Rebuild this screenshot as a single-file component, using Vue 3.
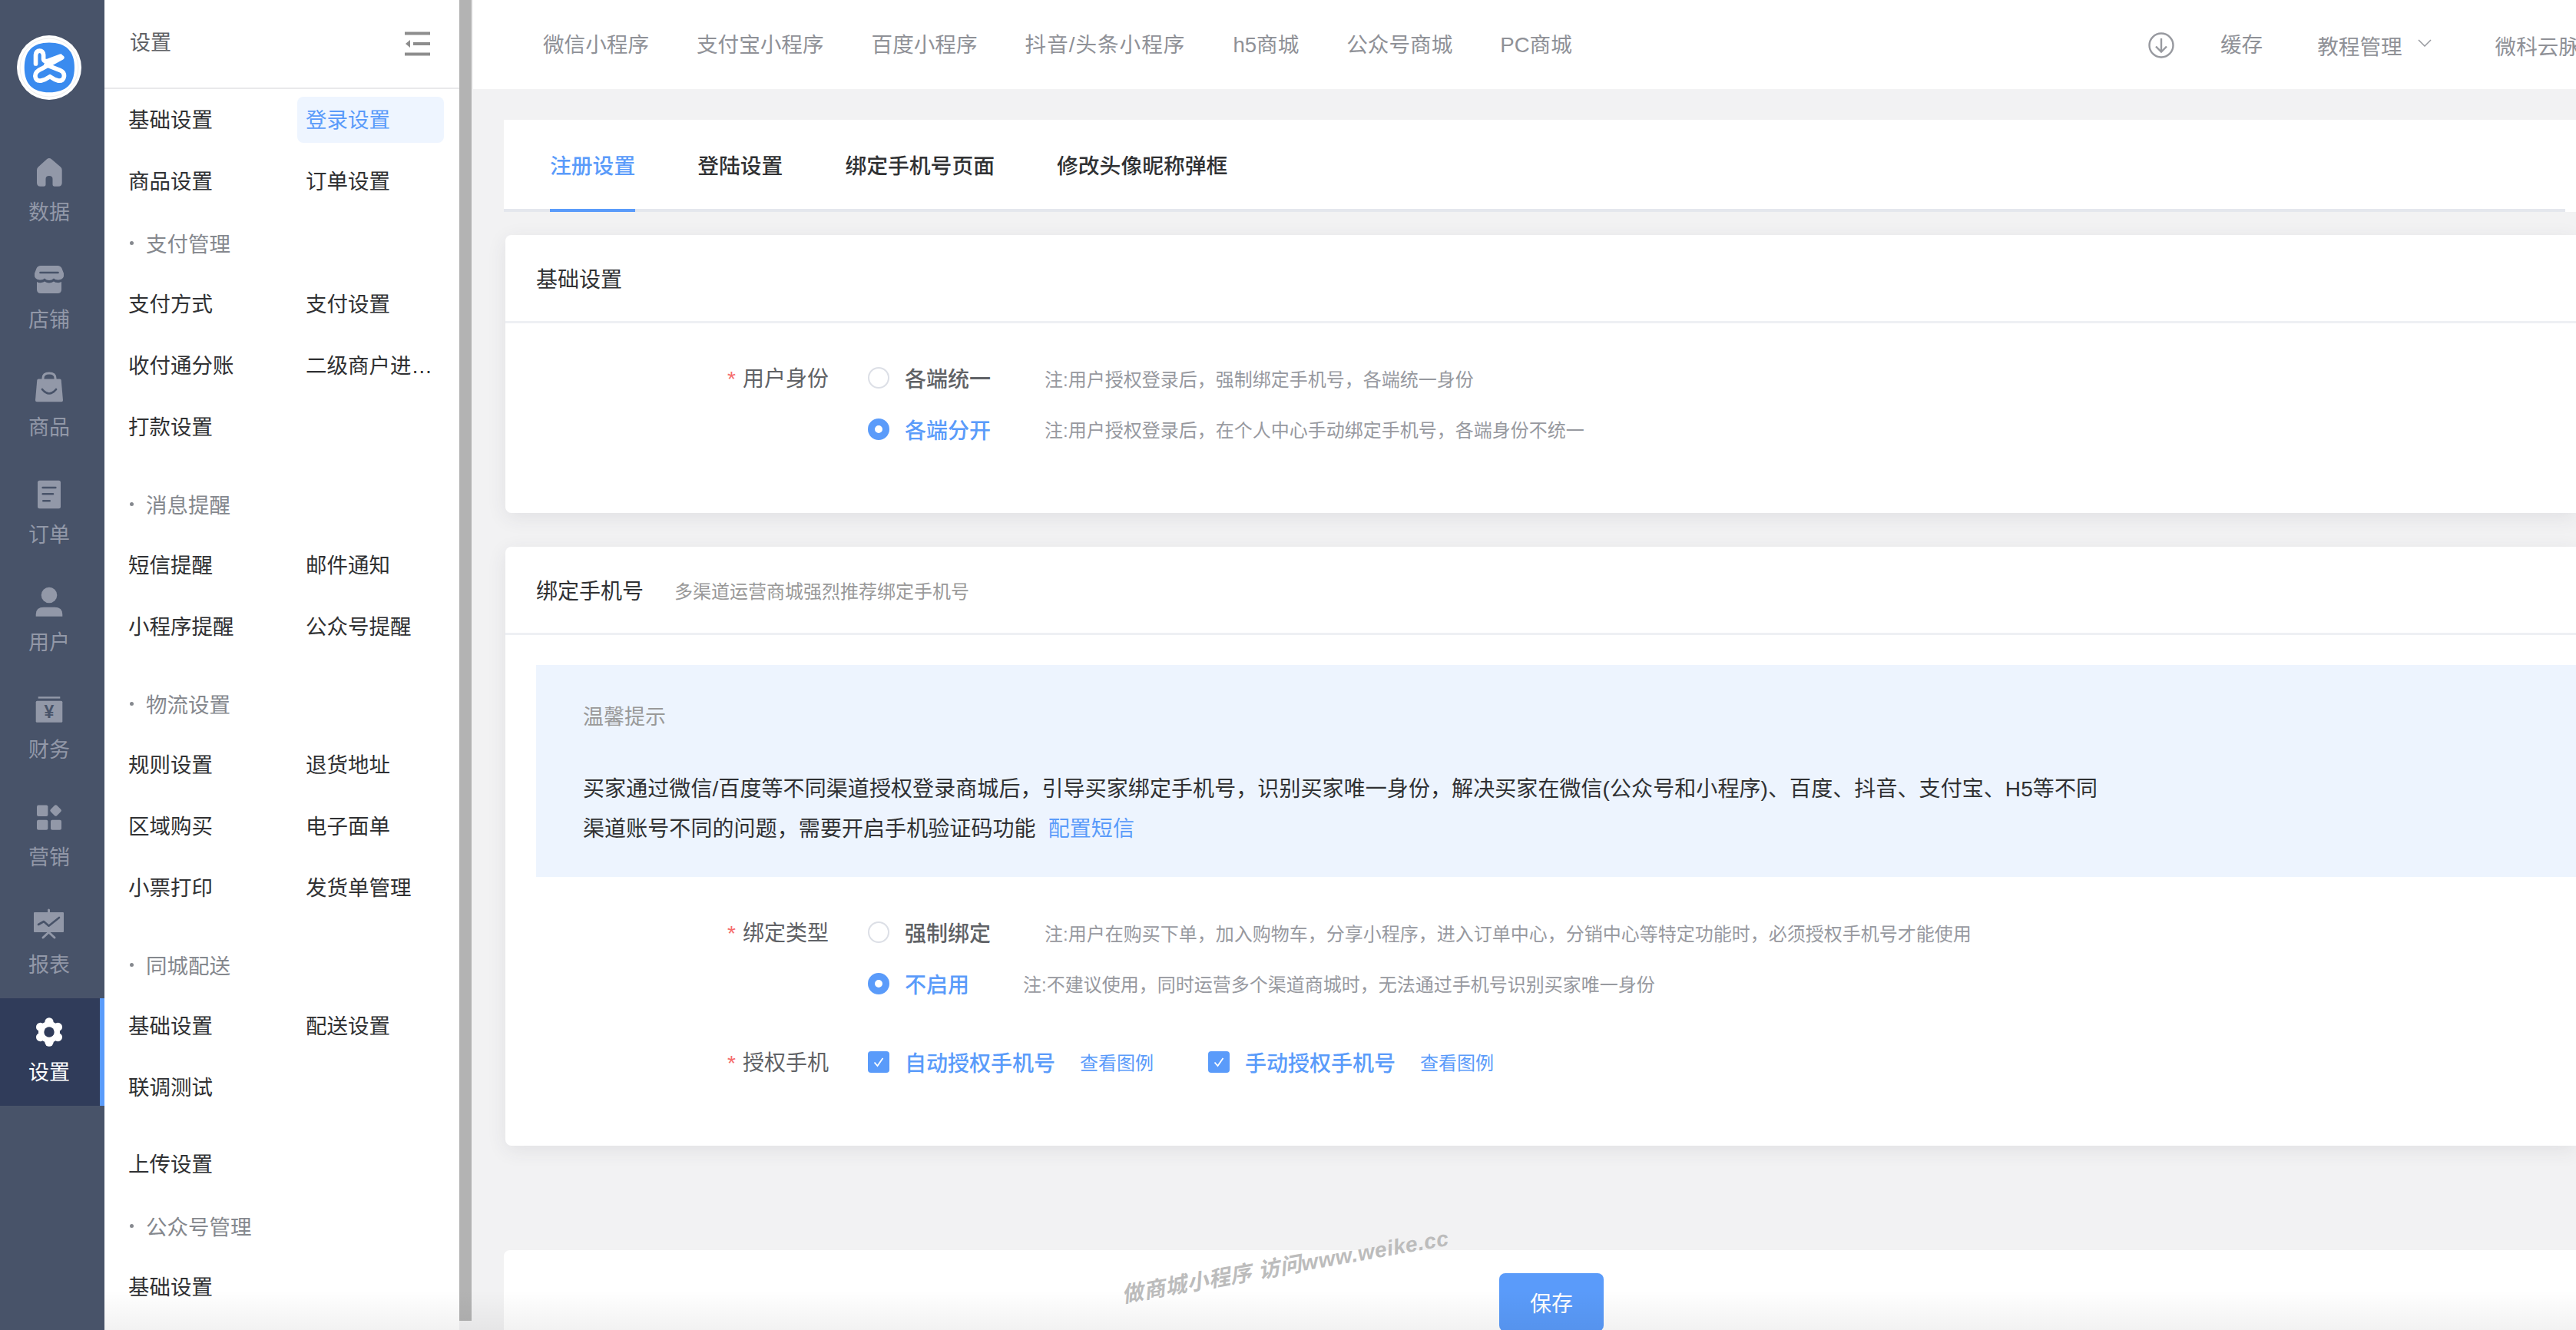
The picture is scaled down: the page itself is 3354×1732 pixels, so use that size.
<template>
  <div class="page">
    <aside class="rail">
      <div class="logo">
        <svg viewBox="37 32 250 250" width="84" height="84">
          <circle cx="162" cy="157" r="125" fill="#fff" />
          <circle cx="162" cy="157" r="113" fill="none" stroke="#dcdcdc" stroke-width="1.5" />
          <path d="M162 60C228 60 260 93 260 157C260 221 228 253 162 253C98 253 66 221 66 157C66 93 98 60 162 60Z" fill="#3a8bef" />
          <g fill="none" stroke="#fff" stroke-width="17" stroke-linecap="round" stroke-linejoin="round">
            <path d="M110 142V108Q112 92 125 92Q138 92 140 108V124Q142 136 160 130L206 113" />
            <path d="M212 118L132 162Q108 172 108 190Q110 210 130 208Q148 204 165 192Q182 204 198 208Q218 210 220 190Q220 174 205 168L150 146" />
          </g>
        </svg>
      </div>
      <div
        v-for="item in railItems"
        :key="item.key"
        class="rail-item"
        :class="{ 'rail-item--on': item.active }"
      >
        <svg class="rail-icon" viewBox="0 0 48 48" width="48" height="48">
          <path v-if="item.key === 'home'" d="M24 6Q25.5 6 27 7.3L39 17.5Q40.7 19 40.7 21.5V38Q40.7 42.7 36 42.7H31Q28.5 42.7 28.5 40V33Q28.5 29 24 29Q19.5 29 19.5 33V40Q19.5 42.7 17 42.7H12.5Q8 42.7 8 38V21.5Q8 19 9.7 17.5L21 7.3Q22.5 6 24 6Z" />
          <template v-else-if="item.key === 'store'">
            <path d="M13 6H35Q39 6 40.5 9.5L43 16Q44 24 36.5 24.5Q32 25 30 22.5Q27.5 25 24 25Q20.5 25 18 22.5Q16 25 11.5 24.5Q4 24 5 16L7.5 9.5Q9 6 13 6Z" />
            <path d="M8 27Q11 29 14 28Q16.5 27.5 18 26.5Q21 28.5 24 28.5Q27 28.5 30 26.5Q32 28 34.5 28Q37.5 28.5 40 27V37Q40 42 35 42H13Q8 42 8 37Z" />
            <path class="cut" d="M12.5 15H35.5" />
          </template>
          <template v-else-if="item.key === 'bag'">
            <path d="M10 13.5H38Q39.5 13.5 39.7 15L42 41Q42.2 43.3 40 43.3H8Q5.8 43.3 6 41L8.3 15Q8.5 13.5 10 13.5Z" />
            <path class="line" d="M16 14V12.5Q16 6 24 6Q32 6 32 12.5V14" />
            <path class="cut" d="M15 27Q24 38 33 27" />
          </template>
          <template v-else-if="item.key === 'order'">
            <rect x="9" y="5.7" width="30" height="36.6" rx="2.5" />
            <path class="cut" d="M15.7 15H32.3M15.7 23.3H29M16.3 32.3H24.7" />
          </template>
          <template v-else-if="item.key === 'user'">
            <circle cx="24" cy="15" r="10.3" />
            <path d="M6.7 42.7V40Q6.7 30.7 17 30.7H31Q41.3 30.7 41.3 40V42.7Z" />
          </template>
          <template v-else-if="item.key === 'money'">
            <rect x="9.7" y="7.2" width="28.6" height="2.4" />
            <rect x="6.7" y="12.7" width="34.6" height="28" rx="1.5" />
            <text class="yen" x="24" y="35" text-anchor="middle">¥</text>
          </template>
          <template v-else-if="item.key === 'market'">
            <rect x="8" y="8.5" width="14.4" height="14.5" rx="2" />
            <rect x="26.9" y="9.8" width="11.4" height="11.4" rx="2" transform="rotate(45 32.6 15.5)" />
            <rect x="8" y="27.7" width="14.4" height="13" rx="2" />
            <rect x="26" y="27.7" width="14" height="13" rx="2" />
          </template>
          <template v-else-if="item.key === 'report'">
            <rect x="4" y="8" width="39" height="26" rx="1" />
            <path class="line" d="M23.5 5V8M23.5 34L16 41M23.5 34L31 41" />
            <path class="cut" d="M10 24L17 20L23.5 25.7L37 15" />
          </template>
          <template v-else>
            <circle cx="24" cy="24" r="14" />
            <circle v-for="g in gearTeeth" :key="g.x + '-' + g.y" :cx="g.x" :cy="g.y" r="5.6" />
            <circle class="hole" cx="24" cy="24" r="6.7" />
          </template>
        </svg>
        <span class="rail-label">{{ item.label }}</span>
      </div>
    </aside>

    <section class="side">
      <div class="side-panel">
        <div class="side-head">
          <span class="side-title">设置</span>
          <svg viewBox="0 0 36 36" width="36" height="36">
            <path d="M1 4.5H34M12 18H34M1 31.5H34" stroke="#8d8d8d" stroke-width="4" fill="none" />
            <path d="M8 13V23L2 18Z" fill="#8d8d8d" />
          </svg>
        </div>
        <div
          v-for="(group, g) in menuGroups"
          :key="g"
          class="menu-group"
          :class="{ 'menu-group--flush': group.flush }"
        >
          <div v-if="group.title" class="menu-title"><i class="dot"></i>{{ group.title }}</div>
          <div class="menu-grid">
            <div
              v-for="name in group.items"
              :key="name"
              class="menu-cell"
              :class="{ 'menu-cell--on': name === '登录设置' }"
            >{{ name }}</div>
          </div>
        </div>
      </div>
      <div class="side-scroll"><div class="side-thumb"></div></div>
    </section>

    <main class="main">
      <header class="topbar">
        <nav class="top-nav">
          <span v-for="n in topNav" :key="n">{{ n }}</span>
        </nav>
        <div class="top-right">
          <svg class="top-low" viewBox="0 0 34 34" width="34" height="34" fill="none" stroke="#97999f" stroke-width="2.4">
            <circle cx="17" cy="17" r="15.5" />
            <path d="M17 8V25M10 18.5L17 25.5L24 18.5" />
          </svg>
          <span class="top-cache">缓存</span>
          <span class="top-low top-course">教程管理</span>
          <svg class="top-chevron" viewBox="0 0 18 10" width="18" height="10" fill="none" stroke="#97999f" stroke-width="1.5">
            <path d="M1 1L9 9L17 1" />
          </svg>
          <span class="top-low top-user">微科云脉</span>
        </div>
      </header>

      <div class="content">
        <div class="tabs">
          <div class="tabs-inner">
            <span
              v-for="(t, i) in tabs"
              :key="t"
              class="tab"
              :class="{ 'tab--on': i === 0 }"
            >{{ t }}</span>
          </div>
        </div>

        <div class="card card--first">
          <div class="card-head">基础设置</div>
          <div class="form-row form-row--first">
            <div class="form-label"><em>*</em>用户身份</div>
            <div class="options">
              <div class="option">
                <i class="radio"></i><span class="opt-text">各端统一</span>
                <span class="note">注:用户授权登录后，强制绑定手机号，各端统一身份</span>
              </div>
              <div class="option option--on">
                <i class="radio"></i><span class="opt-text">各端分开</span>
                <span class="note">注:用户授权登录后，在个人中心手动绑定手机号，各端身份不统一</span>
              </div>
            </div>
          </div>
        </div>

        <div class="card card--second">
          <div class="card-head">绑定手机号<small>多渠道运营商城强烈推荐绑定手机号</small></div>
          <div class="tip">
            <div class="tip-title">温馨提示</div>
            <p class="tip-text">
              买家通过微信/百度等不同渠道授权登录商城后，引导买家绑定手机号，识别买家唯一身份，解决买家在微信(公众号和小程序)、百度、抖音、支付宝、H5等不同<br />渠道账号不同的问题，需要开启手机验证码功能<a class="tip-link">配置短信</a>
            </p>
          </div>
          <div class="form-row form-row--bind">
            <div class="form-label"><em>*</em>绑定类型</div>
            <div class="options">
              <div class="option">
                <i class="radio"></i><span class="opt-text">强制绑定</span>
                <span class="note">注:用户在购买下单，加入购物车，分享小程序，进入订单中心，分销中心等特定功能时，必须授权手机号才能使用</span>
              </div>
              <div class="option option--on">
                <i class="radio"></i><span class="opt-text">不启用</span>
                <span class="note">注:不建议使用，同时运营多个渠道商城时，无法通过手机号识别买家唯一身份</span>
              </div>
            </div>
          </div>
          <div class="form-row form-row--auth">
            <div class="form-label"><em>*</em>授权手机</div>
            <div class="option option--on">
              <template v-for="c in authChecks" :key="c">
                <i class="check">
                  <svg viewBox="0 0 28 28" width="28" height="28" fill="none" stroke="#fff" stroke-width="1.8">
                    <path d="M8.5 14.5L12.5 19L19.5 9" />
                  </svg>
                </i>
                <span class="opt-text">{{ c }}</span>
                <a class="see-link">查看图例</a>
              </template>
            </div>
          </div>
        </div>

        <div class="save-bar">
          <button class="save-btn" type="button">保存</button>
        </div>
      </div>
    </main>

    <div class="watermark">做商城小程序 访问www.weike.cc</div>
    <div class="fade"></div>
  </div>
</template>

<script setup>
const railItems = [
  { key: 'home', label: '数据' },
  { key: 'store', label: '店铺' },
  { key: 'bag', label: '商品' },
  { key: 'order', label: '订单' },
  { key: 'user', label: '用户' },
  { key: 'money', label: '财务' },
  { key: 'market', label: '营销' },
  { key: 'report', label: '报表' },
  { key: 'gear', label: '设置', active: true },
]

const gearTeeth = [0, 60, 120, 180, 240, 300].map((deg) => ({
  x: +(24 + 13.2 * Math.sin((deg * Math.PI) / 180)).toFixed(2),
  y: +(24 - 13.2 * Math.cos((deg * Math.PI) / 180)).toFixed(2),
}))

const menuGroups = [
  { items: ['基础设置', '登录设置', '商品设置', '订单设置'], flush: true },
  { title: '支付管理', items: ['支付方式', '支付设置', '收付通分账', '二级商户进件管理', '打款设置'] },
  { title: '消息提醒', items: ['短信提醒', '邮件通知', '小程序提醒', '公众号提醒'] },
  { title: '物流设置', items: ['规则设置', '退货地址', '区域购买', '电子面单', '小票打印', '发货单管理'] },
  { title: '同城配送', items: ['基础设置', '配送设置', '联调测试'] },
  { items: ['上传设置'], flush: true },
  { title: '公众号管理', items: ['基础设置'] },
]

const topNav = ['微信小程序', '支付宝小程序', '百度小程序', '抖音/头条小程序', 'h5商城', '公众号商城', 'PC商城']
const tabs = ['注册设置', '登陆设置', '绑定手机号页面', '修改头像昵称弹框']
const authChecks = ['自动授权手机号', '手动授权手机号']
</script>

<style>
html,
body {
  margin: 0;
  overflow: hidden;
}
</style>

<style scoped>
.page {
  position: relative;
  display: flex;
  width: 3354px;
  height: 1732px;
  overflow: hidden;
  background: #f2f2f3;
  font-family: "Liberation Sans", "Noto Sans CJK SC", sans-serif;
  font-size: 28px;
  color: #303133;
}

/* rail */
.rail {
  flex: 0 0 136px;
  background: #485369;
}
.logo {
  display: flex;
  justify-content: center;
  padding: 46px 8px 50px 0;
}
.logo svg {
  display: block;
}
.rail-item {
  display: flex;
  flex-direction: column;
  align-items: center;
  box-sizing: border-box;
  height: 140px;
  padding: 20px 8px 0 0;
  color: #9298a8;
  fill: #9298a8;
}
.rail-icon {
  display: block;
  flex: none;
}
.rail-icon .cut {
  fill: none;
  stroke: #485369;
  stroke-width: 2.6;
  stroke-linecap: round;
  stroke-linejoin: round;
}
.rail-icon .line {
  fill: none;
  stroke: #9298a8;
  stroke-width: 3;
  stroke-linecap: round;
}
.rail-icon .yen {
  fill: #485369;
  font-size: 23px;
  font-weight: 700;
}
.rail-label {
  margin-top: 4px;
  font-size: 27px;
  line-height: 50px;
}
.rail-item--on {
  background: #303c5a;
  box-shadow: inset -6px 0 0 #5a9bfa;
  color: #fff;
  fill: #fff;
}
.rail-item--on .hole {
  fill: #303c5a;
}

/* second column */
.side {
  display: flex;
  flex: 0 0 480px;
}
.side-panel {
  flex: 0 0 462px;
  overflow: hidden;
  background: #fff;
}
.side-head {
  display: flex;
  align-items: center;
  justify-content: space-between;
  box-sizing: border-box;
  height: 116px;
  padding: 0 36px 0 33px;
  border-bottom: 2px solid #e9e9eb;
}
.side-title {
  margin-bottom: 8px;
  font-size: 27px;
  color: #606266;
}
.menu-group {
  margin-bottom: 20px;
}
.menu-group--flush {
  margin-bottom: 0;
}
.menu-title {
  display: flex;
  align-items: center;
  height: 80px;
  padding-left: 31px;
  font-size: 27.5px;
  color: #85888e;
}
.dot {
  width: 5px;
  height: 5px;
  margin: 0 16px 0 2px;
  border-radius: 50%;
  background: #85888e;
}
.menu-grid {
  display: grid;
  grid-template-columns: 191px 191px;
  column-gap: 40px;
  padding-left: 20px;
}
.menu-cell {
  box-sizing: border-box;
  height: 60px;
  margin: 10px 0;
  padding: 0 11px;
  border-radius: 8px;
  font-size: 27.5px;
  line-height: 62px;
  color: #303133;
  white-space: nowrap;
  overflow: hidden;
  text-overflow: ellipsis;
}
.menu-cell--on {
  background: #eef5ff;
  color: #5a9bfa;
}
.side-scroll {
  flex: 0 0 18px;
}
.side-thumb {
  width: 16px;
  height: 1720px;
  background: #b3b3b3;
}

/* main */
.main {
  flex: 1;
  min-width: 0;
}
.topbar {
  display: flex;
  align-items: center;
  box-sizing: border-box;
  height: 116px;
  padding: 0 0 4px 91px;
  background: #fff;
  color: #8f9197;
  white-space: nowrap;
}
.top-nav {
  display: flex;
  gap: 62px;
  font-size: 27.6px;
}
/* the slash sits wider in the reference */
.top-nav span:nth-child(4) {
  letter-spacing: 1px;
}
.top-right {
  display: flex;
  align-items: center;
  margin: 0 -5px 0 auto;
  font-size: 27.6px;
}
.top-low {
  margin-top: 6px;
}
.top-cache {
  margin-left: 60px;
}
.top-course {
  margin-left: 71px;
}
.top-chevron {
  margin-left: 20px;
}
.top-user {
  margin-left: 83px;
}

.content {
  padding: 40px 0 0 40px;
}
.tabs {
  background: #fff;
}
.tabs-inner {
  display: flex;
  gap: 81px;
  box-sizing: border-box;
  width: 2684px;
  height: 120px;
  padding-left: 60px;
  border-bottom: 4px solid #e4e7ed;
  font-size: 27.8px;
}
.tab {
  height: 116px;
  font-weight: 500;
  line-height: 121px;
  color: #303133;
}
.tab--on {
  border-bottom: 4px solid #5a9bfa;
  color: #5a9bfa;
}

.card {
  margin-left: 2px;
  border-radius: 8px 0 0 8px;
  background: #fff;
  box-shadow: 0 6px 26px rgba(60, 60, 80, 0.09);
}
.card--first {
  height: 362px;
  margin-top: 30px;
}
.card--second {
  height: 780px;
  margin-top: 44px;
}
.card-head {
  display: flex;
  align-items: center;
  height: 112px;
  padding-left: 40px;
  border-bottom: 3px solid #eef0f4;
}
.card-head small {
  margin-left: 40px;
  font-size: 24px;
  color: #999;
}
.form-row {
  display: flex;
  align-items: flex-start;
}
.form-row--first {
  margin-top: 45px;
}
.form-row--bind {
  margin-top: 46px;
}
.form-row--auth {
  margin-top: 50px;
}
.form-label {
  flex: 0 0 421px;
  margin-right: 51px;
  font-size: 28px;
  line-height: 55px;
  color: #606266;
  text-align: right;
}
.form-label em {
  margin-right: 9px;
  font-style: normal;
  color: #f56c6c;
}
.options {
  display: flex;
  flex-direction: column;
  gap: 14.5px;
}
.option {
  display: flex;
  align-items: center;
  height: 52px;
  white-space: nowrap;
}
.radio {
  flex: none;
  box-sizing: border-box;
  width: 28px;
  height: 28px;
  margin-right: 20px;
  border: 2px solid #dcdfe6;
  border-radius: 50%;
  background: #fff;
}
.option--on .radio {
  border: 9px solid #5a9bfa;
}
.opt-text {
  font-weight: 500;
  color: #606266;
}
.option--on .opt-text {
  color: #5a9bfa;
}
.note {
  margin-left: 70px;
  font-size: 24px;
  color: #97999f;
}
.check {
  flex: none;
  width: 28px;
  height: 28px;
  margin-right: 20px;
  border-radius: 4px;
  background: #5a9bfa;
}
.check svg {
  display: block;
}
.see-link {
  margin: 0 71px 0 32px;
  font-size: 24px;
  color: #5a9bfa;
}

.tip {
  box-sizing: border-box;
  height: 276px;
  margin: 39px 0 0 40px;
  padding: 42px 0 0 61px;
  background: #edf4fe;
}
.tip-title {
  font-size: 27px;
  line-height: 52px;
  color: #999;
}
.tip-text {
  margin: 42px 0 0;
  line-height: 52px;
  letter-spacing: 0.08px;
  white-space: nowrap;
  color: #303133;
}
.tip-link {
  margin-left: 16px;
  color: #5a9bfa;
}

.save-bar {
  display: flex;
  justify-content: center;
  box-sizing: border-box;
  width: 2728px;
  height: 200px;
  margin-top: 136px;
  padding-top: 30px;
  border-radius: 8px 0 0 0;
  background: #fff;
}
.save-btn {
  width: 136px;
  height: 76px;
  border: 0;
  border-radius: 8px;
  background: #5a9bfa;
  font: inherit;
  color: #fff;
}

/* overlays */
.watermark {
  position: absolute;
  left: 1673px;
  top: 1647px;
  font-size: 28px;
  font-weight: 700;
  font-style: italic;
  letter-spacing: 0.6px;
  color: #bcbcbc;
  white-space: nowrap;
  transform: translate(-50%, -50%) rotate(-10deg);
}
.fade {
  position: absolute;
  left: 136px;
  right: 0;
  bottom: 0;
  height: 52px;
  background: linear-gradient(to bottom, rgba(0, 0, 0, 0), rgba(0, 0, 0, 0.05));
  pointer-events: none;
}
</style>
